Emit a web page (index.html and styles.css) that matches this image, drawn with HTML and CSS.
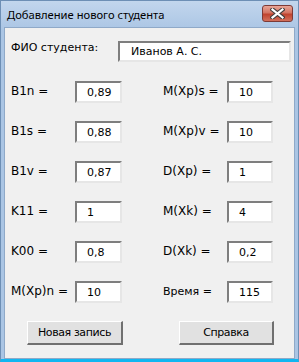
FILE: index.html
```html
<!DOCTYPE html>
<html lang="ru">
<head>
    <meta charset="UTF-8">
    <title>Добавление нового студента</title>
    <link rel="stylesheet" href="styles.css">
</head>
<body>
<div class="window">
    <div class="titlebar">
        <span class="title">Добавление нового студента</span>
        <div class="close">
            <svg width="15" height="11" viewBox="0 0 15 11">
                <path d="M2.5 1.5 L12.5 9.5 M12.5 1.5 L2.5 9.5" stroke="#3e3e3e" stroke-width="4.2" stroke-linecap="square"/>
                <path d="M2.5 1.5 L12.5 9.5 M12.5 1.5 L2.5 9.5" stroke="#ffffff" stroke-width="2.2" stroke-linecap="square"/>
            </svg>
        </div>
    </div>
    <div class="content">
        <div class="fio">
            <span class="label">ФИО студента:</span>
            <div class="box wide">Иванов А. С.</div>
        </div>
        <div class="fields">
            <div class="field"><span class="label">B1n =</span><div class="box">0,89</div></div>
            <div class="field"><span class="label">M(Xp)s =</span><div class="box">10</div></div>
            <div class="field"><span class="label">B1s =</span><div class="box">0,88</div></div>
            <div class="field"><span class="label">M(Xp)v =</span><div class="box">10</div></div>
            <div class="field"><span class="label">B1v =</span><div class="box">0,87</div></div>
            <div class="field"><span class="label">D(Xp) =</span><div class="box">1</div></div>
            <div class="field"><span class="label">K11 =</span><div class="box">1</div></div>
            <div class="field"><span class="label">M(Xk) =</span><div class="box">4</div></div>
            <div class="field"><span class="label">K00 =</span><div class="box">0,8</div></div>
            <div class="field"><span class="label">D(Xk) =</span><div class="box">0,2</div></div>
            <div class="field"><span class="label">M(Xp)n =</span><div class="box">10</div></div>
            <div class="field"><span class="label small">Время =</span><div class="box">115</div></div>
        </div>
        <div class="buttons">
            <div class="button">Новая запись</div>
            <div class="button">Справка</div>
        </div>
    </div>
</div>
</body>
</html>
```

FILE: styles.css
```css
* {
    margin: 0;
    padding: 0;
    box-sizing: border-box;
}

body {
    width: 299px;
    height: 362px;
    font-family: "DejaVu Sans", sans-serif;
    background: #ffffff;
}

.window {
    width: 299px;
    height: 362px;
    display: flex;
    flex-direction: column;
    background: linear-gradient(#c2d6ed, #aac5e4 30px, #aac5e4);
    border: 1px solid #6d8fb5;
    border-bottom: 3px solid #12b6f0;
    padding: 0 3px 0 3px;
}

.titlebar {
    height: 26px;
    display: flex;
    align-items: flex-start;
    justify-content: space-between;
    padding: 4px 2px 0 3px;
}

.title {
    font-family: "Noto Sans", sans-serif;
    font-size: 11.2px;
    color: #000000;
    padding-top: 2px;
}

.close {
    width: 31px;
    height: 17px;
    display: flex;
    align-items: center;
    justify-content: center;
    border: 1px solid #7d3a36;
    border-radius: 3px;
    background: linear-gradient(#e8a596, #d37463 45%, #c0432e 55%, #d2705c);
}

.content {
    flex: 1;
    background: #f0f0f0;
    border: 1px solid #8fa9c8;
    padding: 13px 0 0 6px;
}

.label {
    font-size: 12px;
    color: #000000;
    padding-top: 3px;
}

.label.small {
    font-size: 11px;
    padding-top: 4px;
}

.box {
    width: 47px;
    height: 22px;
    padding: 3px 0 0 10px;
    font-size: 11px;
    background: #ffffff;
    border-top: 2px solid #7e7e7e;
    border-left: 2px solid #7e7e7e;
    border-right: 2px solid #e6e6e6;
    border-bottom: 2px solid #e6e6e6;
}

.box.wide {
    width: 173px;
    height: 21px;
    padding: 2px 0 0 11px;
}

.fio {
    display: flex;
    justify-content: space-between;
    align-items: flex-start;
    padding-right: 3px;
}

.fio .label {
    font-size: 11px;
    padding-top: 0;
}

.fields {
    display: grid;
    grid-template-columns: 111px 110px;
    column-gap: 41px;
    row-gap: 18px;
    margin-top: 19px;
}

.field {
    display: flex;
    justify-content: space-between;
    align-items: flex-start;
}

.field:nth-child(even) .box {
    width: 46px;
}

.buttons {
    display: flex;
    gap: 56px;
    margin-top: 18px;
    padding-left: 16px;
}

.button {
    width: 96px;
    height: 24px;
    font-size: 11px;
    letter-spacing: -0.4px;
    display: flex;
    align-items: center;
    justify-content: center;
    background: #e1e1e1;
    border-top: 1px solid #ffffff;
    border-left: 1px solid #ffffff;
    border-right: 2px solid #707070;
    border-bottom: 2px solid #707070;
}

.button + .button {
    width: 95px;
}
```
